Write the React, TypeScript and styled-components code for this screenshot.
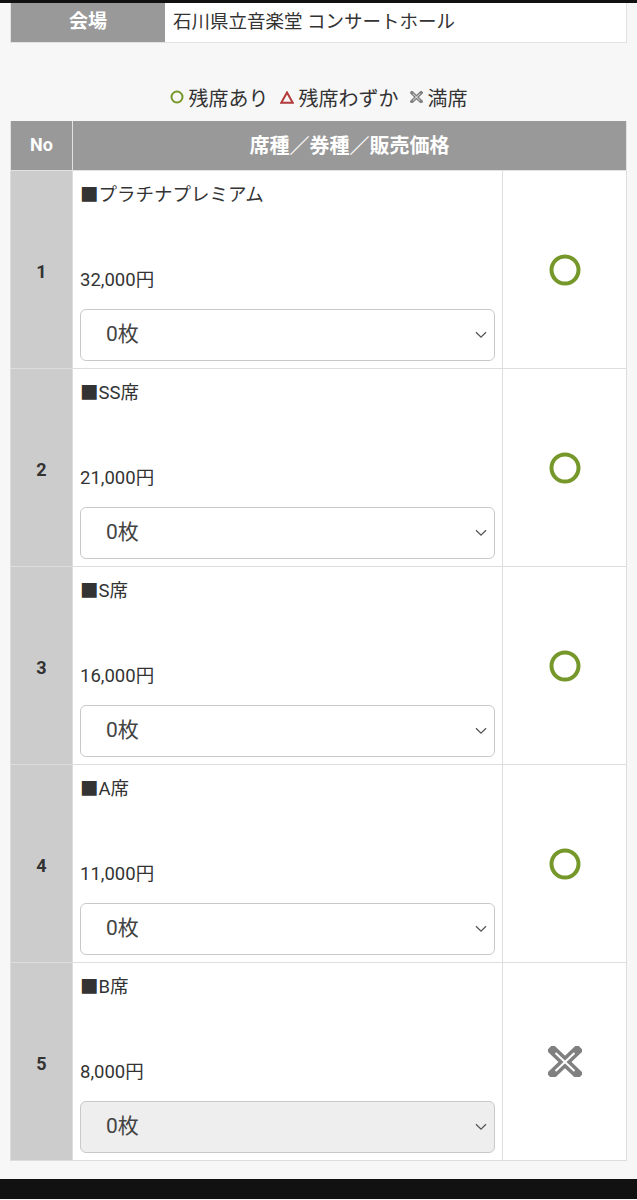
import React from "react";
import styled, { createGlobalStyle } from "styled-components";

const GlobalStyle = createGlobalStyle`
  html, body {
    margin: 0;
    padding: 0;
    background: #f7f7f7;
  }
  body {
    font-family: Roboto, "Noto Sans CJK JP", sans-serif;
    color: #333;
  }
`;

const TopBar = styled.div`
  height: 3px;
  background: #111;
`;

const BottomBar = styled.div`
  height: 20px;
  background: #111;
  margin-top: 18px;
`;

const Main = styled.main`
  padding: 0 10px;
`;

const VenueTable = styled.div`
  display: grid;
  grid-template-columns: 154px 1fr;
  border: 1px solid #e2e2e2;
  border-top: none;
  background: #fff;
`;

const VenueLabel = styled.div`
  background: #999;
  color: #fff;
  font-weight: bold;
  font-size: 19px;
  height: 39px;
  display: flex;
  align-items: center;
  justify-content: center;
  padding-bottom: 6px;
  box-sizing: border-box;
`;

const VenueValue = styled.div`
  font-size: 18.5px;
  display: flex;
  align-items: center;
  padding: 0 0 6px 8px;
  color: #333;
`;

const Legend = styled.div`
  display: flex;
  justify-content: center;
  align-items: center;
  gap: 11px;
  font-size: 20px;
  height: 30px;
  margin: 39px 0 9px;
`;

const LegendItem = styled.span`
  display: inline-flex;
  align-items: center;
  gap: 5px;
`;

const SeatTable = styled.table`
  width: 100%;
  border-collapse: collapse;
  background: #fff;
  table-layout: fixed;
`;

const HeadCell = styled.th`
  background: #999;
  color: #fff;
  font-size: 20px;
  font-weight: bold;
  height: 47px;
  padding: 0 0 2px;
  border: 1px solid #e2e2e2;
  border-top: none;
`;

const NoHead = styled(HeadCell)`
  font-size: 18px;
`;

const NoCell = styled.td`
  background: #ccc;
  text-align: center;
  font-weight: bold;
  font-size: 18px;
  color: #333;
  border: 1px solid #ddd;
  padding: 3px 0 0;
`;

const InfoCell = styled.td`
  border: 1px solid #ddd;
  padding: 12px 7px 7px;
  vertical-align: top;
`;

const InfoBox = styled.div`
  display: flex;
  flex-direction: column;
  height: 178px;
`;

const SeatName = styled.div`
  font-size: 18.5px;
  line-height: 24px;
  color: #333;
`;

const Price = styled.div`
  margin-top: auto;
  font-size: 18.5px;
  line-height: 24px;
  color: #333;
`;

const SelectWrap = styled.div`
  position: relative;
  margin-top: 17px;
`;

const Select = styled.select<{ $off?: boolean }>`
  appearance: none;
  width: 100%;
  height: 52px;
  border: 1px solid #c9c9c9;
  border-radius: 6px;
  background: ${(p) => (p.$off ? "#eee" : "#fff")};
  font-family: inherit;
  font-size: 21px;
  color: #444;
  padding: 0 0 2px 25px;
  opacity: 1;
  box-sizing: border-box;
`;

const Chevron = styled.svg`
  position: absolute;
  right: 8px;
  top: 22px;
  pointer-events: none;
`;

const StatusCell = styled.td`
  border: 1px solid #ddd;
  text-align: center;
  vertical-align: middle;
`;

const Circle = ({ size = 32, stroke = 4 }: { size?: number; stroke?: number }) => (
  <svg width={size} height={size} viewBox={`0 0 ${size} ${size}`} style={{ display: "block", margin: "0 auto" }}>
    <circle cx={size / 2} cy={size / 2} r={size / 2 - stroke / 2 - 0.5} fill="none" stroke="#76982b" strokeWidth={stroke} />
  </svg>
);

const Triangle = () => (
  <svg width="14" height="13" viewBox="0 0 14 13">
    <path d="M7 1.5 L12.8 11.8 H1.2 Z" fill="none" stroke="#b33a3a" strokeWidth="2" strokeLinejoin="miter" />
  </svg>
);

const Cross = ({ size = 34 }: { size?: number }) => (
  <svg width={size} height={size * 0.94} viewBox="0 0 34 32" style={{ display: "block", margin: "0 auto" }}>
    <line x1="5" y1="4.5" x2="29" y2="27.5" stroke="#808080" strokeWidth="9" strokeLinecap="square" />
    <line x1="29" y1="4.5" x2="5" y2="27.5" stroke="#808080" strokeWidth="9" strokeLinecap="square" />
    <line x1="7.5" y1="7" x2="26.5" y2="25" stroke="#fff" strokeWidth="2" />
    <line x1="26.5" y1="7" x2="7.5" y2="25" stroke="#fff" strokeWidth="2" />
  </svg>
);

type Seat = { no: number; name: string; price: string; ok: boolean };

const seats: Seat[] = [
  { no: 1, name: "■プラチナプレミアム", price: "32,000円", ok: true },
  { no: 2, name: "■SS席", price: "21,000円", ok: true },
  { no: 3, name: "■S席", price: "16,000円", ok: true },
  { no: 4, name: "■A席", price: "11,000円", ok: true },
  { no: 5, name: "■B席", price: "8,000円", ok: false },
];

export default function App() {
  return (
    <>
      <GlobalStyle />
      <TopBar />
      <Main>
        <VenueTable>
          <VenueLabel>会場</VenueLabel>
          <VenueValue>石川県立音楽堂 コンサートホール</VenueValue>
        </VenueTable>

        <Legend>
          <LegendItem>
            <Circle size={14} stroke={2} />
            残席あり
          </LegendItem>
          <LegendItem>
            <Triangle />
            残席わずか
          </LegendItem>
          <LegendItem>
            <Cross size={13} />
            満席
          </LegendItem>
        </Legend>

        <SeatTable>
          <colgroup>
            <col style={{ width: 62 }} />
            <col />
            <col style={{ width: 124 }} />
          </colgroup>
          <thead>
            <tr>
              <NoHead>No</NoHead>
              <HeadCell colSpan={2}>席種／券種／販売価格</HeadCell>
            </tr>
          </thead>
          <tbody>
            {seats.map((s) => (
              <tr key={s.no}>
                <NoCell>{s.no}</NoCell>
                <InfoCell>
                  <InfoBox>
                    <SeatName>{s.name}</SeatName>
                    <Price>{s.price}</Price>
                    <SelectWrap>
                      <Select $off={!s.ok} disabled={!s.ok} defaultValue="0">
                        <option value="0">0枚</option>
                        {s.ok && <option value="1">1枚</option>}
                        {s.ok && <option value="2">2枚</option>}
                      </Select>
                      <Chevron width="12" height="8" viewBox="0 0 12 8">
                        <path d="M1 1.2 L6 6.2 L11 1.2" fill="none" stroke="#555" strokeWidth="1.3" />
                      </Chevron>
                    </SelectWrap>
                  </InfoBox>
                </InfoCell>
                <StatusCell>{s.ok ? <Circle /> : <Cross />}</StatusCell>
              </tr>
            ))}
          </tbody>
        </SeatTable>
      </Main>
      <BottomBar />
    </>
  );
}
